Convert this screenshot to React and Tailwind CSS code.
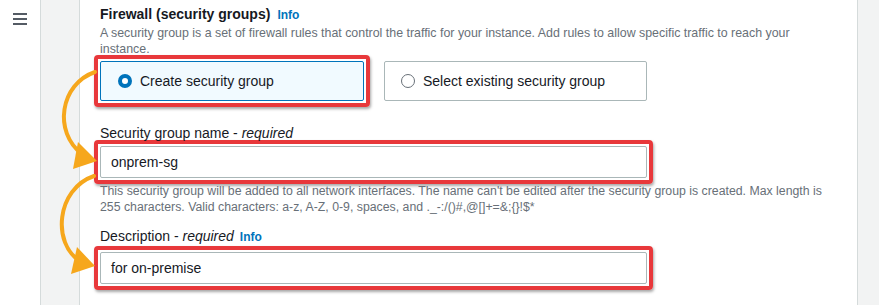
import React from "react";

const font = { fontFamily: '"Liberation Sans", Arial, sans-serif' };

function Highlight({ children, className = "" }) {
  // red call-out frame round a control
  return (
    <div
      className={`-m-[6px] rounded-[4px] border-[4px] border-[#e8383b] p-[2px] shadow-[1px_2px_3px_rgba(0,0,0,0.35)] ${className}`}
    >
      {children}
    </div>
  );
}

function Arrows() {
  return (
    <svg
      className="pointer-events-none absolute left-0 top-0"
      width="879"
      height="305"
      viewBox="0 0 879 305"
    >
      <g fill="none" stroke="#f6a71c" strokeWidth="4" strokeLinecap="round">
        <path d="M95 72 C60 84 53 132 82 154" />
        <path d="M94 176 C56 189 52 244 80 261" />
      </g>
      <g fill="#f6a71c">
        <polygon points="97,161 78,142 73,169" />
        <polygon points="95,266 77,247 71,274" />
      </g>
    </svg>
  );
}

const hint =
  "255 characters. Valid characters: a-z, A-Z, 0-9, spaces, and ._-:/()#,@[]+=&;{}!$*";

export default function App() {
  return (
    <div className="relative flex h-[305px] w-[879px] overflow-hidden bg-white" style={font}>
      {/* side nav */}
      <div className="w-[40px] shrink-0 bg-white pt-[13px] pl-[13px]">
        <div className="flex w-[14px] flex-col gap-[3px]">
          <span className="h-[2px] bg-[#545b64]" />
          <span className="h-[2px] bg-[#545b64]" />
          <span className="h-[2px] bg-[#545b64]" />
        </div>
      </div>
      <div className="w-[40px] shrink-0 border-x border-[#d5dbdb] bg-[#f2f3f3]" />

      {/* panel */}
      <div className="flex-1 bg-white pl-[20px] pr-[30px] pt-[4px]">
        <div className="flex items-baseline gap-[7px] leading-[20px]">
          <span className="text-[14px] font-bold text-[#16191f]">Firewall (security groups)</span>
          <span className="text-[12px] font-bold text-[#0073bb]">Info</span>
        </div>
        <p className="text-[12.4px] leading-[16px] text-[#687078]">
          A security group is a set of firewall rules that control the traffic for your instance. Add rules to allow specific traffic to reach your
          <br />
          instance.
        </p>

        <div className="mt-[4px] flex gap-[20px]">
          <Highlight>
            <div className="flex h-[40px] w-[264px] items-center gap-[8px] rounded-[2px] border border-[#0073bb] bg-[#f1faff] pl-[17px]">
              <span className="h-[14px] w-[14px] rounded-full border-[4px] border-[#0073bb] bg-white" />
              <span className="text-[14px] text-[#16191f]">Create security group</span>
            </div>
          </Highlight>
          <div className="flex h-[40px] w-[263px] items-center gap-[8px] rounded-[2px] border border-[#aab7b8] pl-[16px]">
            <span className="h-[14px] w-[14px] rounded-full border-[1.5px] border-[#687078] bg-white" />
            <span className="text-[14px] text-[#16191f]">Select existing security group</span>
          </div>
        </div>

        <div className="mt-[22px] text-[14px] leading-[20px] text-[#16191f]">
          Security group name - <i>required</i>
        </div>
        <div className="mt-[3px] w-[547px]">
          <Highlight>
            <div className="flex h-[32px] items-center rounded-[2px] border border-[#aab7b8] bg-white pl-[10px] text-[14px] text-[#16191f]">
              onprem-sg
            </div>
          </Highlight>
        </div>
        <p className="mt-[5px] text-[12.3px] leading-[16px] text-[#687078]">
          This security group will be added to all network interfaces. The name can't be edited after the security group is created. Max length is
          <br />
          {hint}
        </p>

        <div className="mt-[11px] flex items-baseline gap-[6px] leading-[20px]">
          <span className="text-[14px] text-[#16191f]">
            Description - <i>required</i>
          </span>
          <span className="text-[12px] font-bold text-[#0073bb]">Info</span>
        </div>
        <div className="mt-[5px] w-[547px]">
          <Highlight>
            <div className="flex h-[32px] items-center rounded-[2px] border border-[#aab7b8] bg-white pl-[10px] text-[14px] text-[#16191f]">
              for on-premise
            </div>
          </Highlight>
        </div>
      </div>

      <div className="w-[22px] shrink-0 border-l border-[#d5dbdb] bg-[#f2f3f3]" />
      <Arrows />
    </div>
  );
}
